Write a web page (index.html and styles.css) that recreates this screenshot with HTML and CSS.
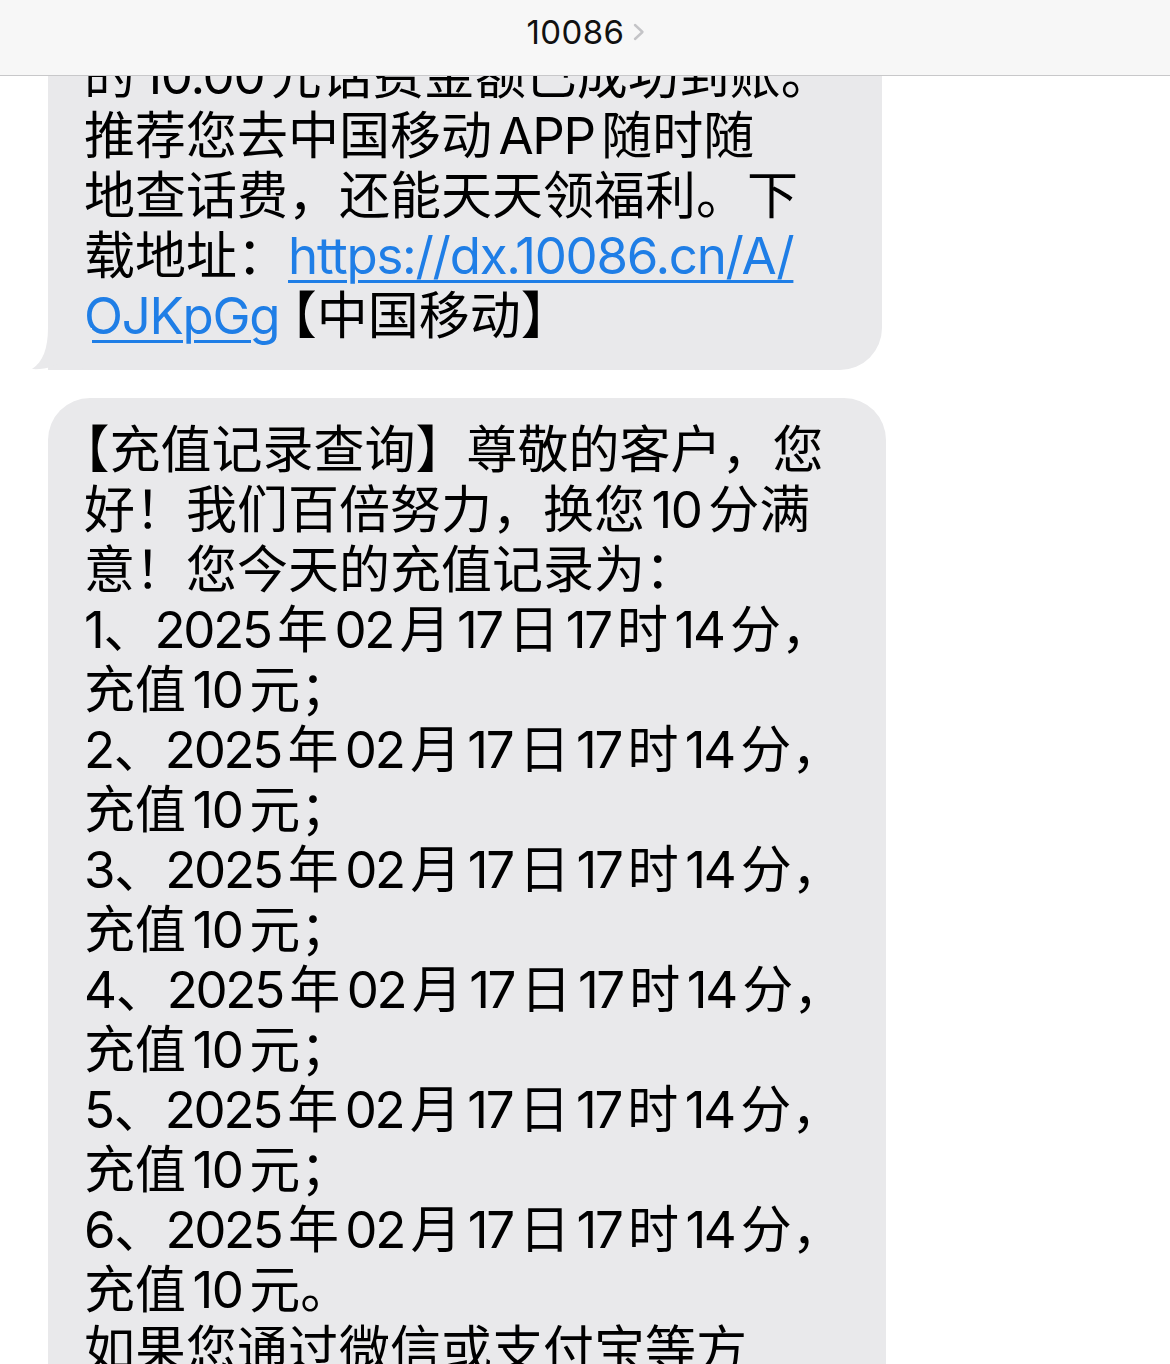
FILE: index.html
```html
<!DOCTYPE html>
<html lang="zh-CN">
<head>
<meta charset="utf-8">
<title>10086</title>
<link rel="stylesheet" href="styles.css">
</head>
<body>
<header class="nav">
  <div class="nav-title">
    <span class="nav-name">10086</span>
    <svg class="nav-chevron" width="12" height="18" viewBox="0 0 12 18"><path d="M2 2 L9.5 9 L2 16" fill="none" stroke="#c4c4c7" stroke-width="2.4" stroke-linecap="round" stroke-linejoin="round"/></svg>
  </div>
</header>
<main class="thread">
  <div class="bubble bubble-first">
    <p class="msg">的<span class="en">10.00</span>元话费金额已成功到账。<br>推荐您去中国移动<span class="en">APP</span>随时随<br>地查话费，还能天天领福利。下<br>载地址：<a class="link en" href="#">https://dx.10086.cn/A/<br>OJKpGg</a><span class="open">【</span>中国移动】</p>
    <svg class="tail" width="60" height="42" viewBox="0 0 60 42"><path d="M16 0 C16 20 11 34 0 41 C12 42 25 38 34 32 C42 38 50 42 60 42 L60 0 Z" fill="#e9e9eb"/></svg>
  </div>
  <div class="bubble bubble-second">
    <p class="msg">【充值记录查询】尊敬的客户，您<br>好！我们百倍努力，换您<span class="en">10</span>分满<br>意！您今天的充值记录为：<br><span class="en">1</span>、<span class="num">2025</span>年<span class="num">02</span>月<span class="num">17</span>日<span class="num">17</span>时<span class="num">14</span>分，<br>充值<span class="en">10</span>元；<br><span class="en">2</span>、<span class="num">2025</span>年<span class="num">02</span>月<span class="num">17</span>日<span class="num">17</span>时<span class="num">14</span>分，<br>充值<span class="en">10</span>元；<br><span class="en">3</span>、<span class="num">2025</span>年<span class="num">02</span>月<span class="num">17</span>日<span class="num">17</span>时<span class="num">14</span>分，<br>充值<span class="en">10</span>元；<br><span class="en">4</span>、<span class="num">2025</span>年<span class="num">02</span>月<span class="num">17</span>日<span class="num">17</span>时<span class="num">14</span>分，<br>充值<span class="en">10</span>元；<br><span class="en">5</span>、<span class="num">2025</span>年<span class="num">02</span>月<span class="num">17</span>日<span class="num">17</span>时<span class="num">14</span>分，<br>充值<span class="en">10</span>元；<br><span class="en">6</span>、<span class="num">2025</span>年<span class="num">02</span>月<span class="num">17</span>日<span class="num">17</span>时<span class="num">14</span>分，<br>充值<span class="en">10</span>元。<br>如果您通过微信或支付宝等方<br>式充值，请以实际到账为准。</p>
  </div>
</main>
</body>
</html>
```

FILE: styles.css
```css
html, body {
  margin: 0;
  padding: 0;
  background: #ffffff;
  overflow: hidden;
}
body {
  width: 1170px;
  height: 1364px;
  font-family: "Inter", "Noto Sans CJK SC", sans-serif;
  color: #000;
}
.nav {
  position: absolute;
  top: 0;
  left: 0;
  right: 0;
  height: 75px;
  background: #f7f7f7;
  border-bottom: 1px solid #c8c8ca;
  display: flex;
  justify-content: center;
  align-items: flex-start;
  z-index: 5;
}
.nav-title {
  display: flex;
  align-items: center;
  gap: 9px;
  margin-top: 12px;
  margin-left: 2px;
}
.nav-name {
  font-family: "Inter", sans-serif;
  font-size: 33px;
  line-height: 40px;
  color: #111;
  letter-spacing: 0.4px;
}
.nav-chevron {
  display: block;
}
.thread {
  display: flex;
  flex-direction: column;
  align-items: flex-start;
  gap: 28px;
  padding-left: 48px;
}
.bubble {
  position: relative;
  background: #e9e9eb;
  border-radius: 42px;
  padding: 46px 40px 24px 36px;
}
.bubble-first {
  width: 758px;
  border-bottom-left-radius: 0;
}
.bubble-second {
  width: 762px;
  padding-top: 22px;
}
.msg {
  margin: 0;
  font-size: 51px;
  line-height: 60px;
  white-space: nowrap;
  text-autospace: normal;
  text-spacing-trim: trim-start;
}
.en {
  letter-spacing: -0.025em;
}
.num {
  letter-spacing: -0.045em;
}
.open {
  font-feature-settings: "halt";
  margin-left: 12px;
}
.link {
  color: #1f7ee6;
  text-decoration: underline;
  text-decoration-thickness: 2.5px;
  text-underline-offset: 6px;
}
.tail {
  position: absolute;
  left: -16px;
  bottom: 0;
}
```
